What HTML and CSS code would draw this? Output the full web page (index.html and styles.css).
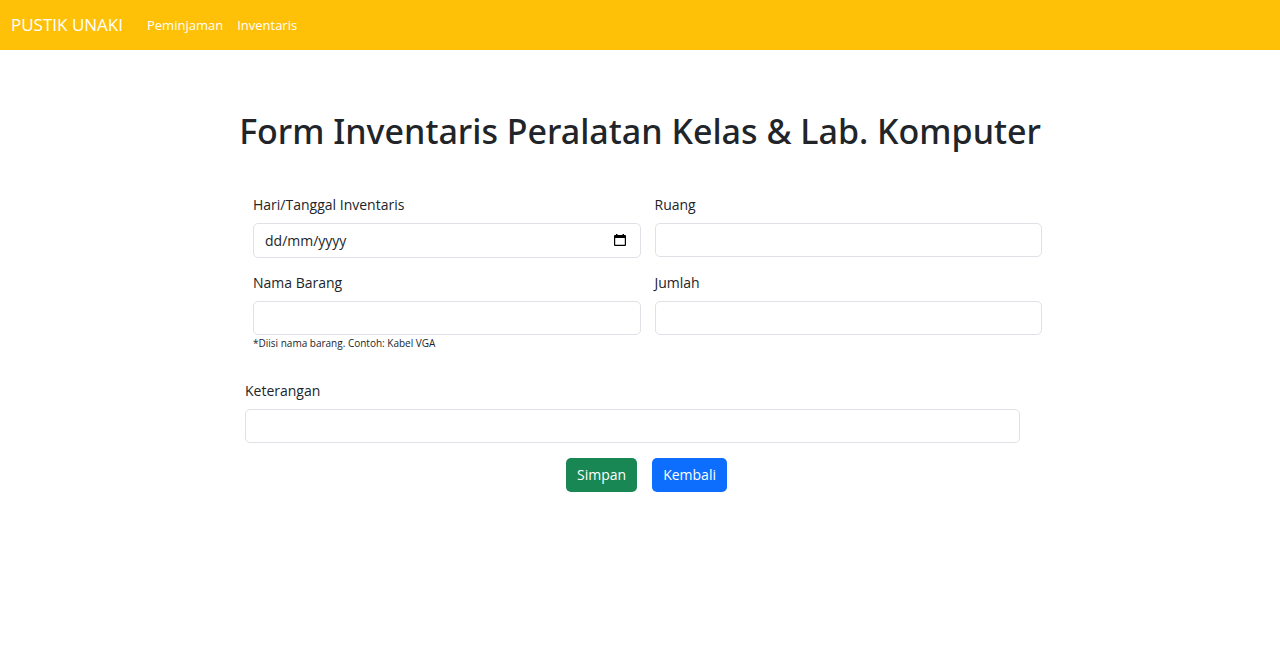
FILE: index.html
```html
<!DOCTYPE html>
<html lang="id">
<head>
  <meta charset="utf-8">
  <meta name="viewport" content="width=device-width, initial-scale=1">
  <title>Form Inventaris</title>
  <link rel="stylesheet" href="styles.css">
</head>
<body>
  <nav class="navbar">
    <a class="brand" href="#">PUSTIK UNAKI</a>
    <a class="nav-link" href="#">Peminjaman</a>
    <a class="nav-link" href="#">Inventaris</a>
  </nav>
  <main class="page">
    <h1 class="title">Form Inventaris Peralatan Kelas &amp; Lab. Komputer</h1>
    <form class="form">
      <div class="grid">
        <div class="field">
          <label class="label" for="tanggal">Hari/Tanggal Inventaris</label>
          <div class="control date">
            <input class="date-text" id="tanggal" type="text" placeholder="dd/mm/yyyy">
            <button class="date-button" type="button" aria-label="Pilih tanggal">
              <svg class="date-icon" viewBox="0 0 12 13" aria-hidden="true">
                <path d="M2 0h1.5v1h5V0H10v1h1q1 0 1 1v9q0 1-1 1H1q-1 0-1-1V2q0-1 1-1h1zM1.2 4v6.8h9.6V4z" fill="#000" fill-rule="evenodd"/>
              </svg>
            </button>
          </div>
        </div>
        <div class="field">
          <label class="label" for="ruang">Ruang</label>
          <input class="control" id="ruang" type="text">
        </div>
        <div class="field">
          <label class="label" for="barang">Nama Barang</label>
          <input class="control" id="barang" type="text">
          <small class="hint">*Diisi nama barang. Contoh: Kabel VGA</small>
        </div>
        <div class="field">
          <label class="label" for="jumlah">Jumlah</label>
          <input class="control" id="jumlah" type="text">
        </div>
      </div>
      <div class="field notes">
        <label class="label" for="keterangan">Keterangan</label>
        <input class="control" id="keterangan" type="text">
      </div>
      <div class="actions">
        <button class="btn btn-save" type="submit">Simpan</button>
        <button class="btn btn-back" type="button">Kembali</button>
      </div>
    </form>
  </main>
</body>
</html>
```
FILE: styles.css
```css
*, *::before, *::after { box-sizing: border-box; }

body {
  margin: 0;
  background: #fff;
  color: #212529;
  font-family: "Segoe UI", "Open Sans", "Noto Sans", sans-serif;
  font-size: 14px;
  line-height: 22px;
}

.navbar {
  display: flex;
  align-items: center;
  gap: 14px;
  min-height: 50px;
  padding: 0 11px;
  background: #ffc107;
}

.brand, .nav-link { color: #fff; text-decoration: none; }
.brand { margin-right: 10px; font-size: 17px; line-height: 28px; }
.nav-link { font-size: 13px; }

.page {
  max-width: 790px;
  margin: 0 auto;
  padding-top: 60px;
}

.title {
  display: flex;
  justify-content: center;
  margin: 0 0 41px;
  font-family: "Segoe UI", "Noto Sans", "Open Sans", sans-serif;
  font-size: 34px;
  font-weight: 500;
  line-height: 43px;
  white-space: nowrap;
}

.form { margin-right: -7px; }

.grid {
  display: grid;
  grid-template-columns: 1fr 1fr;
  gap: 14px;
  padding-left: 8px;
}

.field { display: flex; flex-direction: column; align-items: stretch; }
.label { margin-bottom: 7px; }

.control {
  width: 100%;
  height: 34px;
  padding: 5px 11px;
  border: 1px solid #dee2e6;
  border-radius: 5px;
  background: #fff;
  color: inherit;
  font: inherit;
}

.date { display: flex; align-items: center; height: 35px; padding-right: 14px; }

.date-text {
  flex: 1;
  min-width: 0;
  padding: 0;
  border: 0;
  outline: 0;
  background: none;
  color: inherit;
  font: inherit;
}
.date-text::placeholder { color: #212529; opacity: 1; }

.date-button { display: flex; padding: 0; border: 0; background: none; }
.date-icon { width: 12px; height: 13px; }

.hint { font-size: 10px; line-height: 16px; }

.notes { margin-top: 29px; padding-right: 22px; }

.actions {
  display: flex;
  justify-content: center;
  gap: 15px;
  margin-top: 15px;
  padding-left: 6px;
}

.btn {
  height: 34px;
  padding: 0 11px;
  border: 0;
  border-radius: 5px;
  color: #fff;
  font: inherit;
}
.btn-save { background: #198754; }
.btn-back { background: #0d6efd; }
```
